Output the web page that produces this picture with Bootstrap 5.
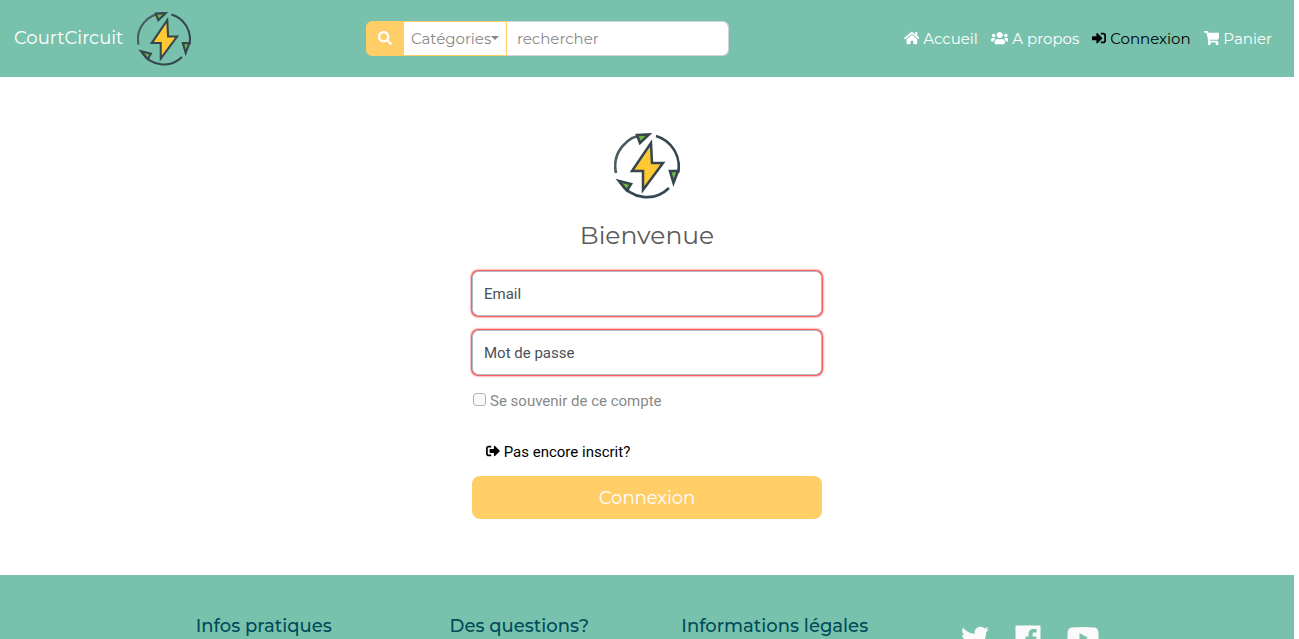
<!DOCTYPE html>
<html lang="fr">
<head>
<meta charset="utf-8">
<meta name="viewport" content="width=device-width, initial-scale=1">
<title>CourtCircuit - Connexion</title>
<link href="https://cdn.jsdelivr.net/npm/bootstrap@5.3.0/dist/css/bootstrap.min.css" rel="stylesheet">
<style>
:root { --mint: #78c2ad; --sun: #ffce67; --ink: #004a59; }
body { font-family: Montserrat, Inter, sans-serif; font-size: 15px; color: #888; padding-right: 5px; }
.bg-mint { background: var(--mint); }
.site-nav { min-height: 77px; padding: 0 22px 0 14px; }
.icon { height: 14px; width: auto; fill: currentColor; vertical-align: -1px; }
.brand-link { gap: 14px; }
.brand-name { font-size: 18px; color: #fff; }
.brand-logo { width: 54px; height: 54px; }
.search-box { width: 363px; height: 35px; }
.search-box .btn, .search-box .form-control { font-size: 15px; line-height: 20px; padding: 6px 11px; }
.search-box .btn-find { background: var(--sun); border-color: var(--sun); color: #fff; width: 38px; padding: 0; border-radius: 6px 0 0 6px; }
.search-box .btn-cat { background: #fff; border-color: var(--sun); color: #888; padding: 6px 7px; width: 104px; white-space: nowrap; border-radius: 0 !important; }
.search-box .btn-cat::after { margin-left: 0; }
.search-box .form-control { border-color: #ced4da; border-left: 0; border-radius: 0 6px 6px 0; }
.search-box .form-control::placeholder { color: #888; }
.site-links { gap: 13px; padding-top: 1px; }
.site-links a { color: #fff; text-decoration: none; white-space: nowrap; }
.site-links a.active { color: #000; }
.login { max-width: 350px; padding: 56px 0; font-family: Roboto, sans-serif; }
.login-logo { width: 66px; height: 66px; }
.login h1 { font: 400 25px/32px Montserrat, Inter, sans-serif; color: #5a5a5a; margin: 20px 0; }
.login .form-control { height: 45px; font-size: 15px; border: 1px solid #b0bccb; border-radius: 6px; padding: 12px 11px; box-shadow: 0 0 2px 1px #f22; }
.login .form-control::placeholder { color: #495057; opacity: 1; }
.login .fields { gap: 14px; }
.remember { margin-top: 15px; line-height: 22px; gap: 4px; }
.remember input { appearance: none; width: 13px; height: 13px; margin: 3px 0 0 1px; border: 1px solid #b4b4b4; border-radius: 3px; background: #f8f8f8; }
.remember input:checked { background: var(--mint); }
.signup { display: inline-block; color: #000; text-decoration: none; margin: 29px 0 13px 14px; line-height: 22px; }
.btn-login { height: 43px; background: var(--sun); color: #fff; border: 0; border-radius: 8px; font: 400 18px/24px Montserrat, Inter, sans-serif; }
.site-foot { padding: 40px 0; }
.foot-cols { max-width: 1022px; }
.site-foot h2 { font-size: 18px; line-height: 22px; font-weight: 500; color: var(--ink); margin: 0; }
.social { gap: 26px; color: #fafafa; padding-top: 9px; }
.social a { color: inherit; line-height: 1; }
.social .icon { height: 28px; }
</style>
</head>
<body class="vh-100 overflow-hidden">
<svg class="d-none">
  <symbol id="logo" viewBox="0 0 66 66">
    <g fill="none" stroke="#354650" stroke-width="2.6">
      <path d="M2 40A31.500 31.500 0 0 1 33 1.700" stroke="#4c5b60"/>
      <path d="M42 3A31.500 31.500 0 0 1 64 40"/>
      <path d="M6 49A31.500 31.500 0 0 0 55 55"/>
      <path d="M23 2 35 1.500 26 10z" fill="#74b843"/>
      <path d="M56 38h8l-4.500 12z" fill="#74b843"/>
      <path d="M5 48l12 3-4 6.500z" fill="#74b843"/>
      <path d="M37 10 18 38h11v19L49 30H38z" fill="#ffc934" stroke-width="2.500"/>
    </g>
  </symbol>
</svg>

<nav class="site-nav bg-mint d-flex align-items-center">
  <a href="#" class="brand-link d-flex align-items-center text-decoration-none">
    <span class="brand-name">CourtCircuit</span>
    <svg class="brand-logo" role="img" aria-label="Logo"><use href="#logo"/></svg>
  </a>
  <form class="search-box input-group mx-auto">
    <button class="btn btn-find" type="button" aria-label="Rechercher"><svg class="icon" viewBox="0 0 512 512"><path d="M505 442.700L405.300 343c-4.500-4.500-10.600-7-17-7H372c27.600-35.300 44-79.700 44-128C416 93.100 322.900 0 208 0S0 93.100 0 208s93.100 208 208 208c48.300 0 92.700-16.400 128-44v16.300c0 6.400 2.500 12.500 7 17l99.700 99.700c9.400 9.400 24.600 9.400 33.900 0l28.300-28.300c9.400-9.400 9.400-24.600.1-34zM208 336c-70.700 0-128-57.200-128-128 0-70.700 57.200-128 128-128 70.700 0 128 57.200 128 128 0 70.700-57.200 128-128 128z"/></svg></button>
    <button class="btn btn-cat dropdown-toggle" type="button">Catégories</button>
    <input class="form-control" type="text" placeholder="rechercher" aria-label="Rechercher un produit">
  </form>
  <div class="site-links d-flex">
    <a href="#"><svg class="icon" viewBox="0 0 576 512"><path d="M280.370 148.260L96 300.110V464a16 16 0 0 0 16 16l112.060-.29a16 16 0 0 0 15.920-16V368a16 16 0 0 1 16-16h64a16 16 0 0 1 16 16v95.640a16 16 0 0 0 16 16.050L464 480a16 16 0 0 0 16-16V300L295.670 148.260a12.190 12.190 0 0 0-15.300 0zM571.600 251.470L488 182.560V44.050a12 12 0 0 0-12-12h-56a12 12 0 0 0-12 12v72.610L318.470 43a48 48 0 0 0-61 0L4.340 251.470a12 12 0 0 0-1.600 16.900l25.500 31A12 12 0 0 0 45.150 301l235.220-193.740a12.190 12.190 0 0 1 15.300 0L530.900 301a12 12 0 0 0 16.900-1.600l25.500-31a12 12 0 0 0-1.700-16.930z"/></svg> Accueil</a>
    <a href="#"><svg class="icon" viewBox="0 0 640 512"><path d="M96 224c35.300 0 64-28.700 64-64s-28.700-64-64-64-64 28.700-64 64 28.700 64 64 64zm448 0c35.300 0 64-28.700 64-64s-28.700-64-64-64-64 28.700-64 64 28.700 64 64 64zm32 32h-64c-17.600 0-33.500 7.100-45.100 18.600 40.300 22.100 68.900 62 75.100 109.400h66c17.700 0 32-14.300 32-32v-32c0-35.300-28.700-64-64-64zm-256 0c61.900 0 112-50.100 112-112S381.900 32 320 32 208 82.100 208 144s50.100 112 112 112zm76.800 32h-8.300c-20.800 10-43.900 16-68.500 16s-47.600-6-68.500-16h-8.300C179.600 288 128 339.600 128 403.200V432c0 26.500 21.500 48 48 48h288c26.500 0 48-21.500 48-48v-28.800c0-63.600-51.600-115.200-115.200-115.200zm-223.700-13.400C161.500 263.100 145.600 256 128 256H64c-35.300 0-64 28.700-64 64v32c0 17.700 14.300 32 32 32h65.900c6.300-47.400 34.900-87.300 75.200-109.400z"/></svg> A propos</a>
    <a href="#" class="active"><svg class="icon" viewBox="0 0 512 512"><path d="M416 448h-84c-6.600 0-12-5.400-12-12v-40c0-6.600 5.400-12 12-12h84c17.700 0 32-14.300 32-32V160c0-17.700-14.300-32-32-32h-84c-6.600 0-12-5.400-12-12V76c0-6.600 5.400-12 12-12h84c53 0 96 43 96 96v192c0 53-43 96-96 96zm-47-201L201 79c-15-15-41-4.500-41 17v96H24c-13.300 0-24 10.700-24 24v96c0 13.300 10.700 24 24 24h136v96c0 21.500 26 32 41 17l168-168c9.300-9.400 9.300-24.600 0-34z"/></svg> Connexion</a>
    <a href="#"><svg class="icon" viewBox="0 0 576 512"><path d="M528.120 301.319l47.273-208C578.806 78.301 567.391 64 551.990 64H159.208l-9.166-44.810C147.758 8.021 137.930 0 126.529 0H24C10.745 0 0 10.745 0 24v16c0 13.255 10.745 24 24 24h69.883l70.248 343.435C147.325 417.100 136 435.222 136 456c0 30.928 25.072 56 56 56s56-25.072 56-56c0-15.674-6.447-29.835-16.824-40h209.647C430.447 426.165 424 440.326 424 456c0 30.928 25.072 56 56 56s56-25.072 56-56c0-22.172-12.888-41.332-31.579-50.405l5.517-24.276c3.413-15.018-8.002-29.319-23.403-29.319H218.117l-6.545-32h293.145c11.206 0 20.920-7.754 23.403-18.681z"/></svg> Panier</a>
  </div>
</nav>

<main class="login mx-auto">
  <form>
    <div class="text-center">
      <svg class="login-logo d-block mx-auto" role="img" aria-label="Logo"><use href="#logo"/></svg>
      <h1>Bienvenue</h1>
    </div>
    <div class="fields d-flex flex-column">
      <input type="email" class="form-control" placeholder="Email" aria-label="Email">
      <input type="password" class="form-control" placeholder="Mot de passe" aria-label="Mot de passe">
    </div>
    <div class="remember d-flex align-items-start">
      <input type="checkbox" id="remember"><label for="remember">Se souvenir de ce compte</label>
    </div>
    <a href="#" class="signup"><svg class="icon" viewBox="0 0 512 512"><path d="M497 273L329 441c-15 15-41 4.500-41-17v-96H152c-13.300 0-24-10.700-24-24v-96c0-13.300 10.700-24 24-24h136V88c0-21.400 25.900-32 41-17l168 168c9.300 9.400 9.300 24.600 0 34zM192 436v-40c0-6.600-5.400-12-12-12H96c-17.700 0-32-14.300-32-32V160c0-17.700 14.300-32 32-32h84c6.600 0 12-5.400 12-12V76c0-6.600-5.400-12-12-12H96c-53 0-96 43-96 96v192c0 53 43 96 96 96h84c6.600 0 12-5.400 12-12z"/></svg> Pas encore inscrit?</a>
    <button type="button" class="btn-login d-block w-100">Connexion</button>
  </form>
</main>

<footer class="site-foot bg-mint">
  <div class="foot-cols row g-0 mx-auto text-center">
    <div class="col"><h2>Infos pratiques</h2></div>
    <div class="col"><h2>Des questions?</h2></div>
    <div class="col"><h2>Informations légales</h2></div>
    <div class="col social d-flex justify-content-center">
      <a href="#" aria-label="Twitter"><svg class="icon" viewBox="0 0 512 512"><path d="M459.370 151.716c.325 4.548.325 9.097.325 13.645 0 138.720-105.583 298.558-298.558 298.558-59.452 0-114.680-17.219-161.137-47.106 8.447.974 16.568 1.299 25.340 1.299 49.055 0 94.213-16.568 130.274-44.832-46.132-.975-84.792-31.188-98.112-72.772 6.498.974 12.995 1.624 19.818 1.624 9.421 0 18.843-1.300 27.614-3.573-48.081-9.747-84.143-51.980-84.143-102.985v-1.299c13.969 7.797 30.214 12.670 47.431 13.319-28.264-18.843-46.781-51.005-46.781-87.391 0-19.492 5.197-37.360 14.294-52.954 51.655 63.675 129.300 105.258 216.365 109.807-1.624-7.797-2.599-15.918-2.599-24.040 0-57.828 46.782-104.934 104.934-104.934 30.213 0 57.502 12.670 76.670 33.137 23.715-4.548 46.456-13.320 66.599-25.340-7.798 24.366-24.366 44.833-46.132 57.827 21.117-2.273 41.584-8.122 60.426-16.243-14.292 20.791-32.161 39.308-52.628 54.253z"/></svg></a>
      <a href="#" aria-label="Facebook"><svg class="icon" viewBox="0 0 26 28"><path d="M1.500 1.500h23a1 1 0 0 1 1 1v23a1 1 0 0 1-1 1h-7v-10h3.500l.6-4h-4V10.500c0-1.400.6-2 2-2h2V5h-3c-3.500 0-5 2-5 5v2.500H10.500v4h3.100v10H1.500a1 1 0 0 1-1-1v-23a1 1 0 0 1 1-1z"/></svg></a>
      <a href="#" aria-label="YouTube"><svg class="icon" viewBox="0 0 32 28"><path fill-rule="evenodd" d="M4.500 3.500Q16 2.500 27.500 3.500 31 4 31.300 8q.5 6 0 12-.5 4-3.800 4.400-11.500 1-23 0Q1.200 24 .7 20q-.5-6 0-12Q1 4 4.500 3.500zM12.500 9v9.500l8.500-4.700z"/></svg></a>
    </div>
  </div>
</footer>
<script src="https://cdn.jsdelivr.net/npm/bootstrap@5.3.0/dist/js/bootstrap.bundle.min.js"></script>
</body>
</html>
